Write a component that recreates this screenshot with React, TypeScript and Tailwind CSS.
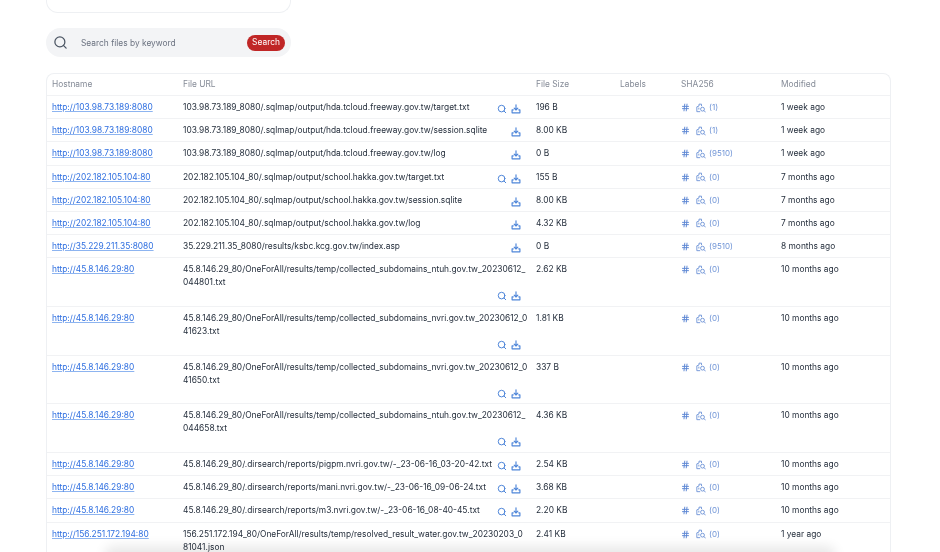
import React from "react";
import { Search, Hash } from "lucide-react";

interface FileRow {
  host: string;
  url: string;
  size: string;
  hits: string;
  modified: string;
  preview?: boolean;
}

const dirs = "45.8.146.29_80/.dirsearch/reports/";
const temp = "45.8.146.29_80/OneForAll/results/temp/collected_subdomains_";

const rows: FileRow[] = [
  { host: "http://103.98.73.189:8080", url: "103.98.73.189_8080/.sqlmap/output/hda.tcloud.freeway.gov.tw/target.txt", size: "196 B", hits: "(1)", modified: "1 week ago", preview: true },
  { host: "http://103.98.73.189:8080", url: "103.98.73.189_8080/.sqlmap/output/hda.tcloud.freeway.gov.tw/session.sqlite", size: "8.00 KB", hits: "(1)", modified: "1 week ago" },
  { host: "http://103.98.73.189:8080", url: "103.98.73.189_8080/.sqlmap/output/hda.tcloud.freeway.gov.tw/log", size: "0 B", hits: "(9510)", modified: "1 week ago" },
  { host: "http://202.182.105.104:80", url: "202.182.105.104_80/.sqlmap/output/school.hakka.gov.tw/target.txt", size: "155 B", hits: "(0)", modified: "7 months ago", preview: true },
  { host: "http://202.182.105.104:80", url: "202.182.105.104_80/.sqlmap/output/school.hakka.gov.tw/session.sqlite", size: "8.00 KB", hits: "(0)", modified: "7 months ago" },
  { host: "http://202.182.105.104:80", url: "202.182.105.104_80/.sqlmap/output/school.hakka.gov.tw/log", size: "4.32 KB", hits: "(0)", modified: "7 months ago" },
  { host: "http://35.229.211.35:8080", url: "35.229.211.35_8080/results/ksbc.kcg.gov.tw/index.asp", size: "0 B", hits: "(9510)", modified: "8 months ago" },
  { host: "http://45.8.146.29:80", url: temp + "ntuh.gov.tw_20230612_\n044801.txt", size: "2.62 KB", hits: "(0)", modified: "10 months ago", preview: true },
  { host: "http://45.8.146.29:80", url: temp + "nvri.gov.tw_20230612_0\n41623.txt", size: "1.81 KB", hits: "(0)", modified: "10 months ago", preview: true },
  { host: "http://45.8.146.29:80", url: temp + "nvri.gov.tw_20230612_0\n41650.txt", size: "337 B", hits: "(0)", modified: "10 months ago", preview: true },
  { host: "http://45.8.146.29:80", url: temp + "ntuh.gov.tw_20230612_\n044658.txt", size: "4.36 KB", hits: "(0)", modified: "10 months ago", preview: true },
  { host: "http://45.8.146.29:80", url: dirs + "pigpm.nvri.gov.tw/-_23-06-16_03-20-42.txt", size: "2.54 KB", hits: "(0)", modified: "10 months ago", preview: true },
  { host: "http://45.8.146.29:80", url: dirs + "mani.nvri.gov.tw/-_23-06-16_09-06-24.txt", size: "3.68 KB", hits: "(0)", modified: "10 months ago", preview: true },
  { host: "http://45.8.146.29:80", url: dirs + "m3.nvri.gov.tw/-_23-06-16_08-40-45.txt", size: "2.20 KB", hits: "(0)", modified: "10 months ago", preview: true },
  { host: "http://156.251.172.194:80", url: "156.251.172.194_80/OneForAll/results/temp/resolved_result_water.gov.tw_20230203_0\n81041.json", size: "2.41 KB", hits: "(0)", modified: "1 year ago", preview: true },
];

const DownloadIcon = () => (
  <svg viewBox="0 0 12 12" className="h-[10px] w-[10px] text-[#4f86d9]" fill="none" stroke="currentColor" strokeWidth="1.4">
    <path d="M6 1v6M3.8 5 6 7.2 8.2 5" strokeLinecap="round" strokeLinejoin="round" />
    <path d="M3.2 7H1.3v3.6h9.4V7H8.8" strokeLinejoin="round" />
  </svg>
);

const SimilarIcon = () => (
  <svg viewBox="0 0 12 12" className="h-[10px] w-[10px] text-[#6f94d6]" fill="none" stroke="currentColor" strokeWidth="1.1">
    <path d="M1 10.4V4.6l2.6-1V1.4h3v2.4" strokeLinejoin="round" />
    <path d="M1 10.4h4M3.4 5.6v2.2" />
    <circle cx="7.8" cy="7.4" r="2.3" />
    <path d="m9.5 9.1 1.8 1.8" strokeLinecap="round" />
  </svg>
);

const App = () => {
  return (
    <div className="relative h-[552px] w-[940px] overflow-hidden bg-white px-[46px] font-['Inter',sans-serif] text-[8.4px] text-[#1f2937] blur-[0.35px]">
      <div className="h-[13px] w-[245px] rounded-b-xl border border-t-0 border-[#eef0f3]" />

      <div className="mt-[15px] flex h-[29px] w-[245px] items-center rounded-full bg-[#f3f4f6] pl-[7px] pr-[6px]">
        <Search className="h-[15px] w-[15px] text-[#4b5563]" strokeWidth={2} />
        <span className="ml-[13px] flex-1 pt-[1px] text-[#6b7280]">Search files by keyword</span>
        <button className="flex h-[16px] w-[38px] items-center justify-center rounded-full bg-[#c02626] text-white">
          Search
        </button>
      </div>

      <div className="mt-[16px] w-[845px] rounded-t-lg border border-b-0 border-[#eef0f3]">
        <div className="flex h-[21px] items-center text-[#858b97]">
          <div className="w-[136px] pl-[5px]">Hostname</div>
          <div className="w-[353px]">File URL</div>
          <div className="w-[84px]">File Size</div>
          <div className="w-[61px]">Labels</div>
          <div className="w-[100px]">SHA256</div>
          <div>Modified</div>
        </div>

        {rows.map((row, i) => {
          const wrapped = row.url.includes("\n");
          const icons = (
            <div className="flex h-[12px] w-[24px] shrink-0 items-center justify-between">
              {row.preview ? <Search className="h-[10px] w-[10px] text-[#4f86d9]" strokeWidth={2.4} /> : <span />}
              <DownloadIcon />
            </div>
          );
          return (
            <div
              key={i}
              className={`flex border-t border-[#f1f2f4] pt-[5px] ${wrapped ? "h-[48.7px]" : "h-[23.2px]"}`}
            >
              <div className="w-[136px] pl-[5px] leading-[13px]">
                <a className="text-[#2f6fe0] underline decoration-[#8db4f0]">{row.host}</a>
              </div>
              <div className="w-[353px]">
                {wrapped ? (
                  <div className="w-[338px]">
                    <div className="whitespace-pre-line leading-[13px]">{row.url}</div>
                    <div className="flex justify-end pt-[1px]">{icons}</div>
                  </div>
                ) : (
                  <div className="flex w-[338px] items-start justify-between">
                    <span className="leading-[13px]">{row.url}</span>
                    <div className="mt-[2px]">{icons}</div>
                  </div>
                )}
              </div>
              <div className="w-[84px] leading-[13px]">{row.size}</div>
              <div className="w-[61px]" />
              <div className="flex w-[100px] items-center self-start text-[8px] leading-[13px] text-[#6f94d6]">
                <Hash className="h-[9px] w-[9px] text-[#5f88d4]" strokeWidth={2.6} />
                <span className="ml-[6px]">
                  <SimilarIcon />
                </span>
                <span className="ml-[3px]">{row.hits}</span>
              </div>
              <div className="leading-[13px]">{row.modified}</div>
            </div>
          );
        })}
      </div>

      <div className="absolute bottom-[-8px] left-[110px] h-[8px] w-[720px] rounded-full shadow-[0_0_12px_6px_rgba(0,0,0,0.09)]" />
    </div>
  );
};

export default App;
